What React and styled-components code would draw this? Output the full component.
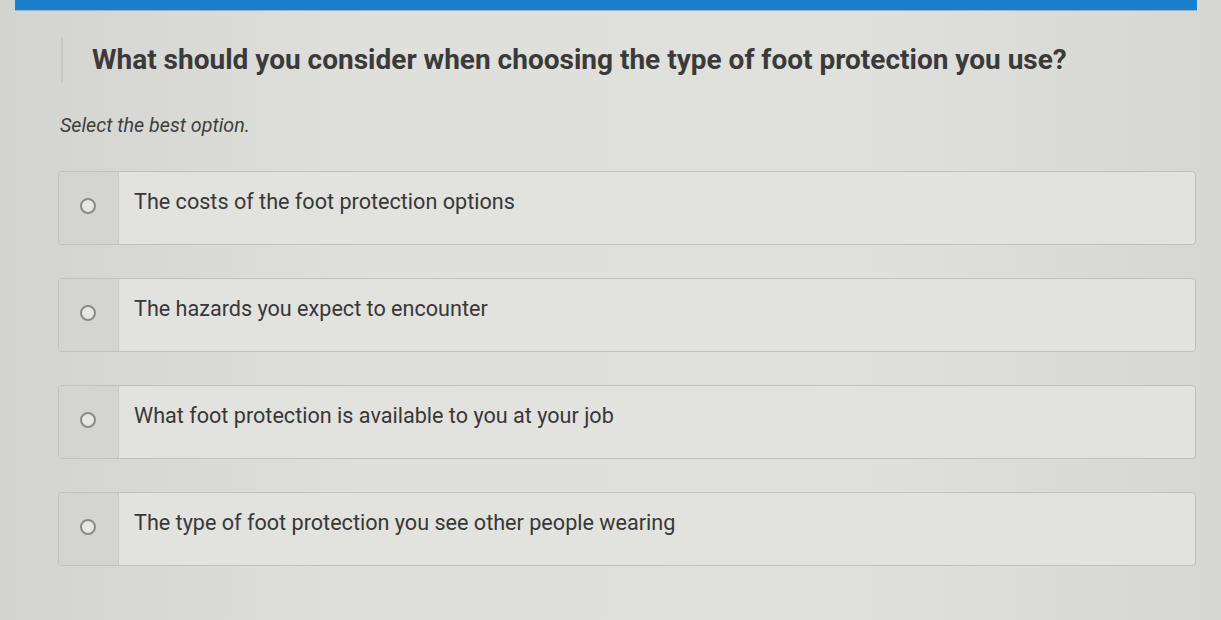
import React from "react";
import styled, { createGlobalStyle } from "styled-components";

const GlobalStyle = createGlobalStyle`
  html, body {
    margin: 0;
    padding: 0;
  }
  body {
    width: 1221px;
    height: 620px;
    overflow: hidden;
    font-family: Roboto, "Liberation Sans", sans-serif;
    background: linear-gradient(90deg, #d3d4d0 0%, #dfdfdb 30%, #e0e0dc 70%, #d6d7d3 100%);
    color: #3b3b3b;
  }
`;

const Page = styled.div`
  display: flex;
  flex-direction: column;
`;

const TopBar = styled.div`
  height: 10px;
  margin: 0 24px 0 15px;
  background: #1b80c9;
  border-bottom: 1px solid #8cb8d8;
`;

const Content = styled.div`
  display: flex;
  flex-direction: column;
  padding: 0 25px 0 58px;
`;

const Question = styled.h1`
  margin: 26px 0 0 3px;
  padding: 0 0 0 29px;
  height: 45px;
  display: flex;
  align-items: center;
  border-left: 2px solid #c9cac6;
  font-size: 28px;
  font-weight: 700;
  color: #3a3a3a;
  white-space: nowrap;
`;

const Hint = styled.p`
  margin: 32px 0 0 2px;
  font-size: 19.7px;
  font-style: italic;
  color: #3f3f3f;
`;

const Options = styled.div`
  display: flex;
  flex-direction: column;
  gap: 33px;
  margin-top: 34px;
`;

const Option = styled.label`
  display: flex;
  box-sizing: border-box;
  height: 74px;
  border: 1px solid #c0c0bc;
  border-radius: 4px;
  background: #e2e2df;
  overflow: hidden;
  cursor: pointer;
`;

const RadioCell = styled.div`
  width: 60px;
  flex-shrink: 0;
  background: #d4d5d1;
  border-right: 1px solid #c8c8c4;
  display: flex;
  align-items: flex-start;
  padding: 26px 0 0 21px;
  box-sizing: border-box;
`;

const Radio = styled.span`
  width: 12px;
  height: 12px;
  border-radius: 50%;
  border: 2px solid #8a8a88;
  background: #e6e6e3;
`;

const OptionText = styled.span`
  padding: 17px 0 0 15px;
  font-size: 21.6px;
  color: #383838;
`;

const choices = [
  "The costs of the foot protection options",
  "The hazards you expect to encounter",
  "What foot protection is available to you at your job",
  "The type of foot protection you see other people wearing",
];

export default function App() {
  return (
    <Page>
      <GlobalStyle />
      <TopBar />
      <Content>
        <Question>
          What should you consider when choosing the type of foot protection you use?
        </Question>
        <Hint>Select the best option.</Hint>
        <Options>
          {choices.map((c) => (
            <Option key={c}>
              <RadioCell>
                <Radio />
              </RadioCell>
              <OptionText>{c}</OptionText>
            </Option>
          ))}
        </Options>
      </Content>
    </Page>
  );
}
